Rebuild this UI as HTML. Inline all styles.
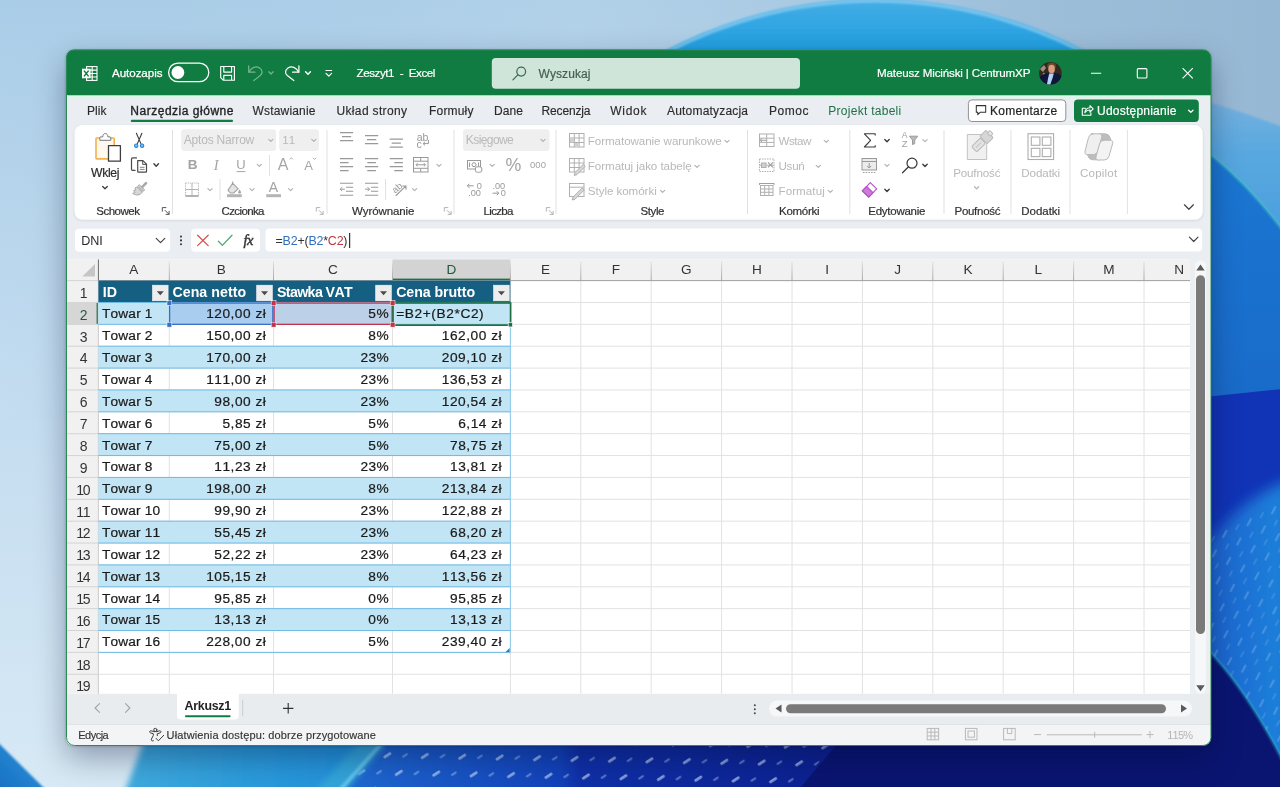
<!DOCTYPE html>
<html lang="pl"><head><meta charset="utf-8"><title>Zeszyt1 - Excel</title>
<style>
html,body{margin:0;padding:0;}
body{width:1280px;height:787px;overflow:hidden;position:relative;background:#b2d0e8;font-family:"Liberation Sans",sans-serif;font-kerning:none;}
svg{position:absolute;left:0;top:0;display:block;}
.t{position:absolute;white-space:pre;line-height:20px;height:20px;font-kerning:none;}
#txt{position:absolute;left:0;top:0;width:1280px;height:787px;will-change:transform;}
#win{position:absolute;left:0;top:0;width:1280px;height:787px;clip-path:inset(49.5px 69px 41.5px 66px round 8px);}
#shadow{position:absolute;left:66px;top:49.5px;width:1145px;height:696px;border-radius:8px;box-shadow:0 12px 30px rgba(0,10,40,.34),0 0 3px rgba(0,0,0,.28);}
</style></head><body>
<svg width="1280" height="787" viewBox="0 0 1280 787">
<defs>
<linearGradient id="wbase" x1="0" y1="0" x2="0" y2="1"><stop offset="0" stop-color="#aacde7"/><stop offset=".5" stop-color="#c3dcf0"/><stop offset="1" stop-color="#d7e9f5"/></linearGradient>
<linearGradient id="wtop" x1="0" y1="0" x2="1" y2="0"><stop offset="0" stop-color="#a8c9e4" stop-opacity="0"/><stop offset=".45" stop-color="#b6d4ea" stop-opacity=".6"/><stop offset=".8" stop-color="#9cbdd8" stop-opacity=".9"/><stop offset="1" stop-color="#97b8d4"/></linearGradient>
<linearGradient id="wdome" gradientUnits="userSpaceOnUse" x1="0" y1="0" x2="0" y2="110"><stop offset="0" stop-color="#43ade5"/><stop offset=".5" stop-color="#1f9ee0"/><stop offset="1" stop-color="#1b90dc"/></linearGradient>
<linearGradient id="wpet" x1="0" y1="0" x2="0" y2="1"><stop offset="0" stop-color="#7cb4df"/><stop offset=".3" stop-color="#5aa8e0"/><stop offset="1" stop-color="#3d99df"/></linearGradient>
<linearGradient id="wblue" x1="0" y1="0" x2="0" y2="1"><stop offset="0" stop-color="#1b78d3"/><stop offset="1" stop-color="#196ac9"/></linearGradient>
<linearGradient id="wtex" x1="0" y1="0" x2="1" y2="0"><stop offset="0" stop-color="#1a5ecb"/><stop offset="1" stop-color="#2084dc"/></linearGradient>
<linearGradient id="wsky" x1="0" y1="0" x2="1" y2="0"><stop offset="0" stop-color="#40abde"/><stop offset=".5" stop-color="#2a9bdc"/><stop offset="1" stop-color="#1f8cda"/></linearGradient>
<linearGradient id="wbot" gradientUnits="userSpaceOnUse" x1="340" y1="0" x2="840" y2="0"><stop offset="0" stop-color="#1f6ad2"/><stop offset=".44" stop-color="#1242ba"/><stop offset=".48" stop-color="#0f30a8"/><stop offset="1" stop-color="#0c2090"/></linearGradient>
<linearGradient id="wwedge" x1="1" y1="0" x2="0" y2="1"><stop offset="0" stop-color="#3696da"/><stop offset=".5" stop-color="#2283cf"/><stop offset="1" stop-color="#1a6ec2"/></linearGradient><pattern id="dash" width="31" height="21" patternUnits="userSpaceOnUse" patternTransform="rotate(-33)"><rect x="2" y="3" width="9" height="2.800" rx="1.400" fill="#d6e8ff" opacity=".6"/><rect x="18" y="13" width="6.500" height="2.200" rx="1.100" fill="#cfe2ff" opacity=".38"/></pattern>
<pattern id="dash2" width="16" height="22" patternUnits="userSpaceOnUse" patternTransform="rotate(28)"><rect x="3" y="2" width="2.2" height="9" rx="1.1" fill="#bfe0ff" opacity=".24"/><rect x="11" y="13" width="2" height="7" rx="1" fill="#bfe0ff" opacity=".15"/></pattern>
<filter id="b1"><feGaussianBlur stdDeviation="1.2"/></filter>
<filter id="b6"><feGaussianBlur stdDeviation="7"/></filter><filter id="b3"><feGaussianBlur stdDeviation="3"/></filter>
</defs>
<rect width="1280" height="787" fill="url(#wbase)"/>
<rect width="1280" height="420" fill="url(#wtop)"/>
<!-- dome -->
<circle cx="875" cy="449" r="450" fill="url(#wdome)" filter="url(#b1)"/><circle cx="875" cy="449" r="448" fill="none" stroke="#8ccdf0" stroke-width="3.5" opacity=".75" filter="url(#b1)"/>
<!-- right side petals -->
<path d="M1150 86 Q1230 106 1290 130 L1290 300 L1150 300 Z" fill="url(#wpet)" filter="url(#b1)"/>
<path d="M1150 118 Q1225 150 1290 240 L1290 420 L1150 420 Z" fill="url(#wblue)"/>
<path d="M1150 118 Q1225 150 1290 240" fill="none" stroke="#46c0c4" stroke-width="2" opacity=".85" filter="url(#b1)"/>
<path d="M1150 402 Q1220 396 1290 388 L1290 800 L1150 800 Z" fill="#1133b6"/>
<path d="M1195 560 Q1235 500 1290 480 L1290 800 L1195 800 Z" fill="url(#wtex)" filter="url(#b6)"/>
<path d="M1205 540 L1290 490 L1290 800 L1205 800 Z" fill="url(#dash2)"/>
<!-- bottom strip -->
<path d="M383 735 L1000 735 L1000 800 L326 800 Z" fill="url(#wbot)"/>
<path d="M383 735 L840 735 L790 800 L326 800 Z" fill="url(#dash)"/>
<path d="M845 735 L1262 735 L1290 790 L1290 800 L790 800 Z" fill="#0a1572"/>
<path d="M1130 600 Q1215 622 1290 775 L1290 800 L1130 800 Z" fill="#0a1572"/>
<path d="M1130 600 Q1215 622 1290 775" fill="none" stroke="#2fb6c8" stroke-width="2" opacity=".7" filter="url(#b1)"/>
<path d="M150 725 L396 725 L329 810 L118 810 Z" fill="url(#wsky)" filter="url(#b3)"/>
<path d="M380 735 L322 800" stroke="#3fb4d8" stroke-width="22" opacity=".55" filter="url(#b3)"/><path d="M389 735 L331 800" stroke="#6accee" stroke-width="4" opacity=".8" filter="url(#b1)"/>
<path d="M-5 739.500 L46 790 L-5 790 Z" fill="url(#wwedge)" filter="url(#b1)"/>
</svg>
<div id="shadow"></div>
<div id="win">
<svg width="1280" height="787" viewBox="0 0 1280 787">
<rect x="60" y="45" width="1160" height="710" fill="#eaedf1"/>
<rect x="60" y="45" width="1160" height="50.5" fill="#107c41"/>
<rect x="60" y="95.5" width="1160" height="1.6" fill="#d6fbe7"/>
<rect x="66.8" y="95.5" width="1.2" height="660" fill="#d6fbe7" opacity=".9"/>
<g fill="none" stroke="#fff" stroke-width="1.1">
<rect x="86.6" y="66.6" width="10.4" height="13.8" fill="none"/>
<path d="M86.6 70.1H97M86.6 73.5H97M86.6 77H97M92.2 66.6V80.4"/>
</g>
<rect x="82" y="68.7" width="8.6" height="9.6" fill="#fff"/>
<path d="M84 70.6l4.6 5.8M88.6 70.6l-4.6 5.8" stroke="#107c41" stroke-width="1.5" fill="none"/>
<rect x="168.600" y="63.100" width="40.200" height="18.600" rx="9.300" fill="none" stroke="#fff" stroke-width="1.300"/><circle cx="177.900" cy="72.500" r="6.400" fill="#fff"/>
<g fill="none" stroke="#fff" stroke-width="1.150" stroke-linejoin="round">
<path d="M220.700 66.500h13.700v13.700h-11.200l-2.500-2.500z"/><path d="M223.800 66.700v5.400h7.800v-5.400"/><path d="M223.800 80v-4.600h7.800v4.600"/></g>
<g fill="none" stroke="#fff" stroke-width="1.250" opacity=".42" stroke-linecap="round" stroke-linejoin="round">
<path d="M248.700 65.900v6.300h6.300"/><path d="M249 72c2.100-4.500 7.100-6.400 10.600-4 3.200 2.200 3.100 5.600.7 7.600l-6.500 5"/><path d="M268.800 71.800l2.200 2.200 2.200-2.200"/></g>
<g fill="none" stroke="#fff" stroke-width="1.250" stroke-linecap="round" stroke-linejoin="round">
<path d="M298.900 65.900v6.300h-6.300"/><path d="M298.600 72c-2.100-4.500-7.100-6.400-10.600-4-3.200 2.200-3.100 5.600-.7 7.600l6.500 5"/><path d="M305.600 71.800l2.400 2.400 2.400-2.400" stroke-width="1.500"/></g>
<g fill="none" stroke="#fff" stroke-width="1.2" stroke-linecap="round" stroke-linejoin="round"><path d="M326 70.5h5.6"/><path d="M326 73.4l2.8 2.8 2.8-2.8"/></g>
<rect x="491.8" y="58" width="308.2" height="30.7" rx="4" fill="#cfe5d9"/>
<g fill="none" stroke="#3d6b52" stroke-width="1.25" stroke-linecap="round"><circle cx="521.2" cy="71.6" r="4.4"/><path d="M517.9 74.9l-5 5"/></g>
<defs><clipPath id="av"><circle cx="1050.4" cy="73.3" r="11.3"/></clipPath><filter id="avb"><feGaussianBlur stdDeviation=".7"/></filter></defs>
<g clip-path="url(#av)"><rect x="1038" y="60" width="26" height="26" fill="#33291f"/>
<g filter="url(#avb)">
<path d="M1040 69l4-4 2 3-3 4zM1043.500 72.500l3 2.500-1 2-3-2z" fill="#b9aa96" opacity=".8"/>
<ellipse cx="1051.600" cy="66.200" rx="4.300" ry="3.600" fill="#6a4826"/>
<ellipse cx="1051.600" cy="69" rx="3.300" ry="4.300" fill="#d99d84"/>
<path d="M1038 86v-6c2-4.500 6-6.500 10.500-7l3 1.500 3-1.500c4.500.5 8 3 10 7v6z" fill="#10153a"/>
<path d="M1049.200 73.500h4.600l-1.400 5-2.600 7.500h-3.200l1.400-7.500z" fill="#b4d0f4"/>
</g></g>
<g fill="none" stroke="#fff" stroke-width="1.1"><path d="M1091 73.2h10.200"/><rect x="1137.300" y="68.6" width="9.600" height="9.400" rx="1"/><path d="M1182.600 68.200l10.200 10.200M1192.800 68.200l-10.200 10.200"/></g>
<rect x="130.8" y="119.8" width="102.2" height="2.2" rx="1" fill="#107c41"/>
<rect x="968.4" y="99.9" width="97.4" height="21.600" rx="3.5" fill="#fff" stroke="#8f9393" stroke-width="1"/>
<path d="M976.300 105.600h9.400v6.600h-5.300l-2.600 2.400v-2.400h-1.500z" fill="none" stroke="#333" stroke-width="1.050" stroke-linejoin="round"/>
<rect x="1074" y="99.4" width="124.800" height="22.500" rx="4" fill="#107c41"/>
<g fill="none" stroke="#fff" stroke-width="1.1" stroke-linejoin="round" stroke-linecap="round"><path d="M1085.500 108.300h-3.200v7h8.600v-2.600"/><path d="M1084.800 112.600c.4-3 2.400-4.700 5.200-4.800v-2.200l3.200 3.300-3.200 3.300v-2.200c-2.200 0-3.900.8-5.200 2.600z"/><path d="M1188.600 110.200l2.200 2.200 2.200-2.200" stroke-width="1.300"/></g>
<rect x="74.500" y="126" width="1128.500" height="94.500" rx="8" fill="#000" opacity=".10" filter="url(#rb)"/><defs><filter id="rb" x="-5%" y="-20%" width="110%" height="150%"><feGaussianBlur stdDeviation="1.600"/></filter></defs>
<rect x="74.500" y="125" width="1128.300" height="94.800" rx="8" fill="#fff"/>
<rect x="75" y="228.800" width="95" height="23" rx="4" fill="#fff"/>
<path d="M156.200 238.400l4.300 4.300 4.300-4.300" fill="none" stroke="#444" stroke-width="1.200" stroke-linecap="round" stroke-linejoin="round"/>
<g fill="#3a3a3a"><circle cx="181" cy="236.600" r="1.050"/><circle cx="181" cy="240.400" r="1.050"/><circle cx="181" cy="244.200" r="1.050"/></g>
<rect x="191.200" y="228.800" width="68.800" height="23" rx="4" fill="#fff"/>
<path d="M197.600 235.200l10.600 10.400M208.200 235.200l-10.600 10.400" stroke="#d8504d" stroke-width="1.250" fill="none" stroke-linecap="round"/>
<path d="M218.400 241.200l4 4.200 9.600-10.200" stroke="#4fa874" stroke-width="1.300" fill="none" stroke-linecap="round" stroke-linejoin="round"/>
<rect x="265.500" y="228.600" width="936.500" height="22.800" rx="4" fill="#fff"/>
<rect x="349.100" y="233" width="1.100" height="15" fill="#222"/>
<path d="M1189.400 237.200l4.300 4.300 4.300-4.300" fill="none" stroke="#444" stroke-width="1.200" stroke-linecap="round" stroke-linejoin="round"/>
<rect x="60" y="693.800" width="1160" height="30.500" fill="#e9ecef"/>
<path d="M177 693.800h61.800v21.700a4 4 0 0 1-4 4h-53.800a4 4 0 0 1-4-4z" fill="#fff"/>
<rect x="185" y="715.300" width="45.600" height="1.900" rx=".9" fill="#107c41"/>
<rect x="242.200" y="700" width="1" height="16" fill="#c9cdd1"/>
<g fill="none" stroke="#a3a7ab" stroke-width="1.200" stroke-linecap="round" stroke-linejoin="round"><path d="M99.500 703.600l-4.400 4.400 4.400 4.400"/><path d="M125.500 703.600l4.400 4.400-4.400 4.400"/></g>
<path d="M283 708.300h10.400M288.200 703.100v10.400" stroke="#333" stroke-width="1.150" fill="none"/>
<g fill="#444"><circle cx="754.800" cy="705.200" r="1"/><circle cx="754.800" cy="709.200" r="1"/><circle cx="754.800" cy="713.200" r="1"/></g>
<rect x="769" y="700.600" width="423" height="16" rx="8" fill="#f6f7f8"/>
<rect x="786" y="704.300" width="380" height="9" rx="4.500" fill="#7a7a7a"/>
<path d="M781.500 704.600v8l-6-4z" fill="#5a5a5a"/><path d="M1181 704.600v8l6-4z" fill="#5a5a5a"/>
<rect x="60" y="724.300" width="1160" height="30" fill="#f3f4f5"/><rect x="60" y="723.900" width="1160" height=".9" fill="#dcdfe2"/>
<g fill="none" stroke="#3d3d3d" stroke-width="1" stroke-linecap="round" stroke-linejoin="round"><circle cx="155.300" cy="729.900" r="1.600"/><path d="M153.400 740.800c-1.300.6-2.600-.4-2-1.700l1.900-3.600v-1.800l-2.800-.8c-1.400-.5-.9-2.400.6-2.100l2.600.8h3.200l2.600-.8c1.500-.3 2 1.600.6 2.100l-2.800.8v2"/><path d="M156 738.300l2.400 2.500 5.300-5.500"/></g>
<g fill="none" stroke="#b9b9b9" stroke-width="1">
<rect x="927.200" y="728.400" width="11.400" height="11.400"/><path d="M927.200 732.200h11.400M927.200 736h11.400M931 728.400v11.400M934.800 728.400v11.400"/>
<rect x="965.400" y="728.400" width="11.600" height="11.400"/><rect x="968" y="731" width="6.400" height="6.200"/>
<rect x="1003.600" y="728.400" width="11.600" height="11.400"/><path d="M1007.400 728.400v5.200h4.400v-5.200"/>
<path d="M1034 734.600h7M1046.800 734.800h95M1094.700 731.800v6M1146.500 734.600h7M1150 731.100v7"/></g>
<path d="M172.5 130V214 M327 130V214 M454 130V214 M556 130V214 M747.5 130V214 M849.8 130V214 M944 130V214 M1011 130V214 M1070 130V214 M1127.4 130V214" stroke="#e1e1e1" stroke-width="1" fill="none"/>
<g fill="none" stroke="#555" stroke-width="1"><path d="M162.3 211.6V207.6h4"/><path d="M164.9 210.2l4.200 4.200M169.10000000000002 211.0v3.400h-3.400"/></g>
<g fill="none" stroke="#b3b3b3" stroke-width="1"><path d="M316.3 211.6V207.6h4"/><path d="M318.90000000000003 210.2l4.200 4.200M323.1 211.0v3.400h-3.400"/></g>
<g fill="none" stroke="#b3b3b3" stroke-width="1"><path d="M444.3 211.6V207.6h4"/><path d="M446.90000000000003 210.2l4.200 4.200M451.1 211.0v3.400h-3.400"/></g>
<g fill="none" stroke="#b3b3b3" stroke-width="1"><path d="M546.3 211.6V207.6h4"/><path d="M548.9 210.2l4.200 4.200M553.0999999999999 211.0v3.400h-3.400"/></g>
<path d="M1184.400 204.800l4.500 4.500 4.500-4.500" fill="none" stroke="#444" stroke-width="1.250" stroke-linecap="round" stroke-linejoin="round"/>
<g stroke-linejoin="round">
<rect x="96" y="138" width="18.200" height="20.900" rx=".8" fill="#fef8ee" stroke="#f2b04e" stroke-width="1.600"/>
<path d="M99.800 140.300v-2.600c0-.5.300-.8.800-.8h2.100c.1-2.100 1.100-3.400 2.600-3.400s2.500 1.300 2.600 3.400h2.100c.5 0 .8.300.8.800v2.600z" fill="#fff" stroke="#777" stroke-width="1"/>
<rect x="108.500" y="145.700" width="11.900" height="15.500" fill="#fff" stroke="#3d3d3d" stroke-width="1.300"/></g>
<path d="M102.70 186.45l2.3 2.3 2.3-2.3" fill="none" stroke="#3c3c3c" stroke-width="1.3" stroke-linecap="round" stroke-linejoin="round"/>
<g fill="none" stroke-linecap="round"><path d="M136.400 133.300l4.600 10.600M141.900 133.300l-4.600 10.600" stroke="#3c3c3c" stroke-width="1.100"/>
<circle cx="136.200" cy="145.700" r="1.700" fill="#7cc3f2" stroke="#2b86d8" stroke-width="1.100"/><circle cx="142.100" cy="145.700" r="1.700" fill="#7cc3f2" stroke="#2b86d8" stroke-width="1.100"/></g>
<g fill="none" stroke="#4a4a4a" stroke-width="1.200" stroke-linejoin="round" stroke-linecap="round"><path d="M136.500 157.900h-4c-.6 0-1 .4-1 1v10.400c0 .6.400 1 1 1h2.600"/><path d="M137.700 160.600h5.200l3.600 3.600v7.200c0 .4-.3.700-.7.700h-7.400c-.4 0-.7-.3-.7-.7z" fill="#fff"/><path d="M142.700 160.800v3.600h3.600" stroke-width="1"/><path d="M140.200 167.300h4M140.200 169.400h4" stroke-width=".9" stroke="#777"/></g>
<path d="M153.90 163.85l2.3 2.3 2.3-2.3" fill="none" stroke="#3c3c3c" stroke-width="1.4" stroke-linecap="round" stroke-linejoin="round"/>
<g stroke-linejoin="round" stroke-linecap="round"><path d="M146 183.200l-4.600 4.600" stroke="#a9a9a9" stroke-width="2.600" fill="none"/><path d="M139.600 184.900l5 5-1.700 1.700-5-5z" fill="#c9c9c9" stroke="#a3a3a3" stroke-width=".9"/><path d="M137.300 187.200l5 5-2.200 2.200c-2.400 1-5 .7-7.400-.9l2.300-1.200-1.500-1.700 2.100-.6-.5-1.700z" fill="#d6d6d6" stroke="#a3a3a3" stroke-width=".9"/></g>
<rect x="181.200" y="129.200" width="94.800" height="21.800" rx="3" fill="#efefef"/><rect x="279.200" y="129.200" width="39.800" height="21.800" rx="3" fill="#efefef"/>
<path d="M268.70 139.35l2.1 2.1 2.1-2.1" fill="none" stroke="#b3b3b3" stroke-width="1.2" stroke-linecap="round" stroke-linejoin="round"/>
<path d="M311.70 139.35l2.1 2.1 2.1-2.1" fill="none" stroke="#b3b3b3" stroke-width="1.2" stroke-linecap="round" stroke-linejoin="round"/>
<path d="M236.600 171.600h8.800" stroke="#a6a6a6" stroke-width="1"/>
<path d="M257.20 164.35l2.1 2.1 2.1-2.1" fill="none" stroke="#b3b3b3" stroke-width="1.2" stroke-linecap="round" stroke-linejoin="round"/>
<path d="M269.500 155V176M220 179V200M385.500 179V200" stroke="#e1e1e1" stroke-width="1"/>
<path d="M289.700 159.400l1.600-1.600 1.600 1.600" fill="none" stroke="#a6a6a6" stroke-width=".9"/>
<path d="M313 157.800l1.600 1.600 1.600-1.600" fill="none" stroke="#a6a6a6" stroke-width=".9"/>
<g fill="none" stroke="#b3b3b3"><rect x="185.500" y="183" width="13" height="13" stroke-width="1" stroke-dasharray="1.200 1"/><path d="M192 183v13M185.500 189.500h13" stroke-width="1"/><path d="M185.500 196h13" stroke-width="1.400" stroke="#a0a0a0"/></g>
<path d="M207.90 188.55l2.1 2.1 2.1-2.1" fill="none" stroke="#b3b3b3" stroke-width="1.2" stroke-linecap="round" stroke-linejoin="round"/>
<g fill="none" stroke="#a3a3a3" stroke-width="1.100" stroke-linejoin="round"><path d="M232.600 183.200l5.600 5.600-4.600 4.200h-3.200l-2.400-2.600z" fill="#e4e4e4"/><path d="M232.600 183.200v-1.800"/><path d="M239.600 189.400c.9 1.300 1.400 2.100 1.400 2.800a1.400 1.400 0 0 1-2.800 0c0-.7.500-1.500 1.400-2.800z" fill="#a3a3a3" stroke="none"/></g><rect x="227" y="194.200" width="14.800" height="3" fill="#b5b5b5"/>
<path d="M249.90 188.55l2.1 2.1 2.1-2.1" fill="none" stroke="#b3b3b3" stroke-width="1.2" stroke-linecap="round" stroke-linejoin="round"/>
<rect x="266.200" y="194.200" width="14.800" height="3" fill="#b5b5b5"/>
<path d="M288.50 188.55l2.1 2.1 2.1-2.1" fill="none" stroke="#b3b3b3" stroke-width="1.2" stroke-linecap="round" stroke-linejoin="round"/>
<path d="M340.00 132.60h13.2 M342.00 136.60h9.2 M340.00 140.60h13.2" stroke="#999999" stroke-width="1.200" fill="none"/>
<path d="M365.00 135.60h13.2 M367.00 139.60h9.2 M365.00 143.60h13.2" stroke="#999999" stroke-width="1.200" fill="none"/>
<path d="M389.70 139.20h13.2 M391.70 143.20h9.2 M389.70 147.20h13.2" stroke="#999999" stroke-width="1.200" fill="none"/>
<path d="M340.00 158.60h13.2 M340.00 162.60h8.6 M340.00 166.60h13.2 M340.00 170.60h8.6" stroke="#999999" stroke-width="1.200" fill="none"/>
<path d="M365.00 158.60h13.2 M367.30 162.60h8.6 M365.00 166.60h13.2 M367.30 170.60h8.6" stroke="#999999" stroke-width="1.200" fill="none"/>
<path d="M389.70 158.60h13.2 M394.30 162.60h8.6 M389.70 166.60h13.2 M394.30 170.60h8.6" stroke="#999999" stroke-width="1.200" fill="none"/>
<path d="M428.400 140v3.600h-5.200M425 141.800l-1.900 1.800 1.900 1.800" fill="none" stroke="#999999" stroke-width="1"/>
<g fill="none" stroke="#999999" stroke-width="1"><rect x="413.500" y="157.500" width="14.500" height="14.500"/><path d="M413.500 161.200h14.500M413.500 168.300h14.500M420.700 157.500v3.700M420.700 168.300v3.700"/><path d="M416 164.800h9.500M417.600 163.200l-1.600 1.600 1.600 1.600M423.900 163.200l1.600 1.600-1.600 1.600"/></g>
<path d="M436.90 164.35l2.1 2.1 2.1-2.1" fill="none" stroke="#b3b3b3" stroke-width="1.2" stroke-linecap="round" stroke-linejoin="round"/>
<path d="M340 183.200h13.200M346 187.200h7.200M346 191.200h7.200M340 195.200h13.200" stroke="#999999" stroke-width="1.050" fill="none"/>
<path d="M344.8 189.200h-4.600M342.2 187.200l-2 2 2 2" stroke="#999999" stroke-width="1" fill="none"/>
<path d="M365 183.200h13.200M371 187.200h7.200M371 191.200h7.200M365 195.200h13.200" stroke="#999999" stroke-width="1.050" fill="none"/>
<path d="M365 189.200h4.600M367.6 187.200l2 2-2 2" stroke="#999999" stroke-width="1" fill="none"/>
<g fill="none" stroke="#999999" stroke-width="1.050" stroke-linecap="round"><path d="M396 195.500l10-9.600M406 185.900h-3.400M406 185.900v3.400"/></g>
<path d="M412.50 188.55l2.1 2.1 2.1-2.1" fill="none" stroke="#b3b3b3" stroke-width="1.2" stroke-linecap="round" stroke-linejoin="round"/>
<rect x="463" y="129.200" width="86.500" height="21.800" rx="3" fill="#efefef"/>
<path d="M540.90 139.35l2.1 2.1 2.1-2.1" fill="none" stroke="#b3b3b3" stroke-width="1.2" stroke-linecap="round" stroke-linejoin="round"/>
<g fill="none" stroke="#999999" stroke-width="1"><rect x="467.500" y="160.500" width="13" height="8.500"/><circle cx="474" cy="164.700" r="2"/><path d="M469.500 162.500v4.500M478.500 162.500v4.500"/><ellipse cx="478.600" cy="168" rx="3.200" ry="1.300" fill="#fff"/><path d="M475.400 168v3c0 .7 1.400 1.300 3.200 1.300s3.200-.6 3.200-1.300v-3" fill="#fff"/></g>
<path d="M490.10 164.35l2.1 2.1 2.1-2.1" fill="none" stroke="#b3b3b3" stroke-width="1.2" stroke-linecap="round" stroke-linejoin="round"/>
<path d="M473.600 185.800h-6.200M469.400 183.800l-2 2 2 2" fill="none" stroke="#999999" stroke-width="1"/>
<path d="M492.600 193.200h6.200M496.800 191.200l2 2-2 2" fill="none" stroke="#999999" stroke-width="1"/>
<g fill="none" stroke="#b0b0b0" stroke-width="1"><rect x="569.500" y="133.500" width="14.500" height="13.500"/><path d="M569.500 138h14.500M569.500 142.500h14.500M574.300 133.500v13.500M579.100 133.500v13.500"/><path d="M570 138.500h4v4h-4zM574.800 142.900h4v3.600h-4z" fill="#d0d0d0" stroke="none"/></g>
<g fill="none" stroke="#b0b0b0" stroke-width="1"><rect x="569.500" y="158.500" width="14.500" height="13.500"/><path d="M569.500 163h14.500M569.500 167.500h14.500M574.300 158.500v13.500M579.100 158.500v13.500"/><path d="M575 172.600l8.200-8.200 2 2-8.200 8.200-2.800.8z" fill="#d8d8d8"/></g>
<g fill="none" stroke="#b0b0b0" stroke-width="1"><rect x="569.500" y="183.500" width="14.500" height="13"/><path d="M569.500 187.200h14.500"/><path d="M573 197.200l9.200-9.200 2 2-9.200 9.200-2.800.8z" fill="#d8d8d8"/></g>
<path d="M724.90 140.35l2.1 2.1 2.1-2.1" fill="none" stroke="#b3b3b3" stroke-width="1.2" stroke-linecap="round" stroke-linejoin="round"/>
<path d="M694.90 165.35l2.1 2.1 2.1-2.1" fill="none" stroke="#b3b3b3" stroke-width="1.2" stroke-linecap="round" stroke-linejoin="round"/>
<path d="M660.50 190.35l2.1 2.1 2.1-2.1" fill="none" stroke="#b3b3b3" stroke-width="1.2" stroke-linecap="round" stroke-linejoin="round"/>
<g fill="none" stroke="#b0b0b0" stroke-width="1"><rect x="759.500" y="134" width="14.500" height="12.500"/><path d="M759.500 138.200h14.500M759.500 142.400h14.500M766.700 134v12.500"/><path d="M767 140.300h-7M762.200 138.300l-2 2 2 2" stroke="#9f9f9f"/></g>
<g fill="none" stroke="#b0b0b0" stroke-width="1"><rect x="759.500" y="159" width="14.500" height="12.500" stroke-dasharray="1.500 1"/><path d="M759.500 165.200h14.500"/><path d="M768 162.300l5 5M773 162.300l-5 5" stroke="#9f9f9f" stroke-width="1.200"/><rect x="761.500" y="163" width="4.500" height="4.500" fill="#d0d0d0"/></g>
<g fill="none" stroke="#b0b0b0" stroke-width="1"><rect x="760.500" y="185.500" width="12.500" height="10"/><path d="M760.500 189h12.500M760.500 192.300h12.500M764.700 185.500v10M768.900 185.500v10"/><path d="M759.500 183v2M774 183v2M759.500 183.500h14.500" stroke="#9f9f9f"/></g>
<path d="M824.20 140.35l2.1 2.1 2.1-2.1" fill="none" stroke="#b3b3b3" stroke-width="1.2" stroke-linecap="round" stroke-linejoin="round"/>
<path d="M816.20 165.35l2.1 2.1 2.1-2.1" fill="none" stroke="#b3b3b3" stroke-width="1.2" stroke-linecap="round" stroke-linejoin="round"/>
<path d="M828.20 190.35l2.1 2.1 2.1-2.1" fill="none" stroke="#b3b3b3" stroke-width="1.2" stroke-linecap="round" stroke-linejoin="round"/>
<path d="M875.200 135.600v-1.800h-10.800l6.200 6.600-6.200 6.600h10.800v-1.800" fill="none" stroke="#3a3a3a" stroke-width="1.100" stroke-linejoin="round"/>
<path d="M884.80 139.50l2.2 2.2 2.2-2.2" fill="none" stroke="#3c3c3c" stroke-width="1.4" stroke-linecap="round" stroke-linejoin="round"/>
<path d="M909.400 136.200h8.400l-3.100 3.800v3.600l-2.200 1v-4.600z" fill="#b9b9b9" stroke="#9c9c9c" stroke-width="1" stroke-linejoin="round"/>
<path d="M922.90 139.55l2.1 2.1 2.1-2.1" fill="none" stroke="#b3b3b3" stroke-width="1.2" stroke-linecap="round" stroke-linejoin="round"/>
<g fill="none" stroke="#999999" stroke-width="1"><rect x="862" y="158.500" width="14.500" height="11.500" fill="#ececec"/><path d="M862 161.500h14.500"/><path d="M869.200 163v5M867.200 166l2 2 2-2"/><path d="M863 172.500h12.500" stroke-dasharray="1.500 1.200"/></g>
<path d="M884.90 164.35l2.1 2.1 2.1-2.1" fill="none" stroke="#b3b3b3" stroke-width="1.2" stroke-linecap="round" stroke-linejoin="round"/>
<g fill="none" stroke="#3a3a3a" stroke-width="1.250" stroke-linecap="round"><circle cx="912" cy="163.200" r="5"/><path d="M908.300 167l-5.800 5.800"/></g>
<path d="M922.80 164.30l2.2 2.2 2.2-2.2" fill="none" stroke="#3c3c3c" stroke-width="1.4" stroke-linecap="round" stroke-linejoin="round"/>
<g stroke-linejoin="round"><path d="M862.300 190.900l8-8.200 6.400 6.200-8 8.200z" fill="#fff" stroke="#b552c6" stroke-width="1.150"/><path d="M862.300 190.900l4.300-4.400 6.400 6.200-4.300 4.400z" fill="#cf7adb" stroke="#b552c6" stroke-width="1.150"/></g>
<path d="M884.80 189.30l2.2 2.2 2.2-2.2" fill="none" stroke="#3c3c3c" stroke-width="1.4" stroke-linecap="round" stroke-linejoin="round"/>
<g stroke="#c2c2c2" stroke-width="1" stroke-linejoin="round"><path d="M967.300 134.500h19.400v25h-19.400z" fill="#f0f0f0"/>
<g transform="rotate(45 980.500 143)"><rect x="975.300" y="130.200" width="10.400" height="8.600" rx="1" fill="#d6d6d6" stroke="#b9b9b9"/><rect x="978.300" y="127.600" width="4.400" height="3.600" rx=".8" fill="#e9e9e9" stroke="#b9b9b9"/><rect x="976.800" y="139.600" width="7.400" height="12.400" rx="1.600" fill="#e3e3e3" stroke="#b9b9b9"/><path d="M980.500 142.400v7" stroke="#c4c4c4" fill="none"/></g></g>
<path d="M974.50 186.75l2.1 2.1 2.1-2.1" fill="none" stroke="#b3b3b3" stroke-width="1.2" stroke-linecap="round" stroke-linejoin="round"/>
<g fill="none" stroke="#aeaeae" stroke-width="1.100"><rect x="1028" y="133.700" width="25.600" height="25.800"/><rect x="1031.300" y="137" width="8.600" height="8.300"/><rect x="1042.300" y="137" width="8.600" height="8.300"/><rect x="1031.300" y="148.300" width="8.600" height="8.300"/><rect x="1042.300" y="148.300" width="8.600" height="8.300"/></g>
<g stroke="#b9b9b9" stroke-width="1" stroke-linejoin="round">
<path d="M1098.500 133.800h6.500q4 0 5 3.800l.9 3h-9.400z" fill="#bdbdbd"/>
<path d="M1099.500 159.800h-6.500q-4 0-5-3.800l-.9-3h9.400z" fill="#bdbdbd"/>
<path d="M1091 133.800h8q3.600 0 2.600 3.600l-3.600 13.400q-1 3.800-4.800 3.800h-5.500q-3.600 0-2.600-3.600l3.400-13.400q1-3.800 4.800-3.800z" fill="#efefef"/>
<path d="M1102 140.200h8q3.600 0 2.600 3.600l-3.600 12.400q-1 3.800-4.800 3.800h-5.500q-3.600 0-2.600-3.600l3.400-12.400q1-3.800 4.800-3.800z" fill="#f3f3f3"/></g>
<rect x="60" y="259.5" width="1130.0" height="434.29999999999995" fill="#fff"/>
<rect x="60" y="259.5" width="1130.0" height="21.100000000000023" fill="#f1f1f1"/>
<rect x="60" y="259.5" width="38.400000000000006" height="434.29999999999995" fill="#f1f1f1"/>
<rect x="392.5" y="259.5" width="117.89999999999998" height="21.100000000000023" fill="#d3d3d3"/>
<rect x="392.5" y="278.6" width="117.89999999999998" height="2" fill="#1e7145"/>
<rect x="60" y="302.47" width="38.400000000000006" height="21.87" fill="#d6d6d6"/>
<rect x="96.60000000000001" y="302.47" width="2" height="21.87" fill="#1e7145"/>
<path d="M98.4 280.60H1190.0 M98.4 302.47H1190.0 M98.4 324.34H1190.0 M98.4 346.21H1190.0 M98.4 368.08H1190.0 M98.4 389.95H1190.0 M98.4 411.82H1190.0 M98.4 433.69H1190.0 M98.4 455.56H1190.0 M98.4 477.43H1190.0 M98.4 499.30H1190.0 M98.4 521.17H1190.0 M98.4 543.04H1190.0 M98.4 564.91H1190.0 M98.4 586.78H1190.0 M98.4 608.65H1190.0 M98.4 630.52H1190.0 M98.4 652.39H1190.0 M98.4 674.26H1190.0 M98.40 280.6V693.8 M169.30 280.6V693.8 M273.50 280.6V693.8 M392.50 280.6V693.8 M510.40 280.6V693.8 M580.80 280.6V693.8 M651.20 280.6V693.8 M721.60 280.6V693.8 M792.00 280.6V693.8 M862.40 280.6V693.8 M932.80 280.6V693.8 M1003.20 280.6V693.8 M1073.60 280.6V693.8 M1144.00 280.6V693.8" stroke="#e2e2e2" stroke-width="1" fill="none"/>
<path d="M66 280.60H98.4 M66 302.47H98.4 M66 324.34H98.4 M66 346.21H98.4 M66 368.08H98.4 M66 389.95H98.4 M66 411.82H98.4 M66 433.69H98.4 M66 455.56H98.4 M66 477.43H98.4 M66 499.30H98.4 M66 521.17H98.4 M66 543.04H98.4 M66 564.91H98.4 M66 586.78H98.4 M66 608.65H98.4 M66 630.52H98.4 M66 652.39H98.4 M66 674.26H98.4" stroke="#d4d4d4" stroke-width="1" fill="none"/>
<defs><linearGradient id="hdg" gradientUnits="userSpaceOnUse" x1="0" y1="259.5" x2="0" y2="280.6"><stop offset="0" stop-color="#e6e6e6"/><stop offset="1" stop-color="#a6a6a6"/></linearGradient></defs><path d="M169.30 261.5V280.6 M273.50 261.5V280.6 M392.50 261.5V280.6 M510.40 261.5V280.6 M580.80 261.5V280.6 M651.20 261.5V280.6 M721.60 261.5V280.6 M792.00 261.5V280.6 M862.40 261.5V280.6 M932.80 261.5V280.6 M1003.20 261.5V280.6 M1073.60 261.5V280.6 M1144.00 261.5V280.6" stroke="url(#hdg)" stroke-width="1" fill="none"/>
<path d="M98.4 280.6H1190.0" stroke="#a2a2a2" stroke-width="1" fill="none"/>
<path d="M98.4 259.5V280.6" stroke="#6a6a6a" stroke-width="1" fill="none"/>
<path d="M98.4 280.6V693.8" stroke="#cfcfcf" stroke-width="1" fill="none"/>
<path d="M95 264v12.600h-12.700z" fill="#c6c6c6"/>
<rect x="98.4" y="280.6" width="412.0" height="21.87" fill="#156082"/>
<rect x="98.4" y="302.47" width="412.0" height="21.87" fill="#c1e5f5"/>
<rect x="98.4" y="346.21" width="412.0" height="21.87" fill="#c1e5f5"/>
<rect x="98.4" y="389.95" width="412.0" height="21.87" fill="#c1e5f5"/>
<rect x="98.4" y="433.69" width="412.0" height="21.87" fill="#c1e5f5"/>
<rect x="98.4" y="477.43" width="412.0" height="21.87" fill="#c1e5f5"/>
<rect x="98.4" y="521.17" width="412.0" height="21.87" fill="#c1e5f5"/>
<rect x="98.4" y="564.91" width="412.0" height="21.87" fill="#c1e5f5"/>
<rect x="98.4" y="608.65" width="412.0" height="21.87" fill="#c1e5f5"/>
<path d="M98.4 302.47H510.4 M98.4 324.34H510.4 M98.4 346.21H510.4 M98.4 368.08H510.4 M98.4 389.95H510.4 M98.4 411.82H510.4 M98.4 433.69H510.4 M98.4 455.56H510.4 M98.4 477.43H510.4 M98.4 499.30H510.4 M98.4 521.17H510.4 M98.4 543.04H510.4 M98.4 564.91H510.4 M98.4 586.78H510.4 M98.4 608.65H510.4 M98.4 630.52H510.4 M98.4 652.39H510.4" stroke="#6cbbe6" stroke-width="1" fill="none"/>
<path d="M510.4 302.47V652.3900000000001" stroke="#8cc9ea" stroke-width="1" fill="none"/>
<rect x="169.3" y="302.47" width="104.19999999999999" height="21.87" fill="#a9cdee"/>
<rect x="273.5" y="302.47" width="119.0" height="21.87" fill="#bcd0e8"/>
<rect x="169.60000000000002" y="303.07000000000005" width="103.19999999999999" height="21.27" fill="none" stroke="#3a6fc6" stroke-width="1.300"/>
<rect x="274.1" y="303.07000000000005" width="118.0" height="21.27" fill="none" stroke="#c2334a" stroke-width="1.300"/>
<rect x="393.0" y="302.97" width="117.59999999999998" height="22.17" fill="none" stroke="#1e7145" stroke-width="1.700"/>
<rect x="167.00" y="300.47" width="4.800" height="4.800" fill="#3a6fc6" stroke="#fff" stroke-width=".5"/>
<rect x="167.00" y="322.34" width="4.800" height="4.800" fill="#3a6fc6" stroke="#fff" stroke-width=".5"/>
<rect x="271.20" y="300.47" width="4.800" height="4.800" fill="#c2334a" stroke="#fff" stroke-width=".5"/>
<rect x="271.20" y="322.34" width="4.800" height="4.800" fill="#c2334a" stroke="#fff" stroke-width=".5"/>
<rect x="390.20" y="300.47" width="4.800" height="4.800" fill="#c2334a" stroke="#fff" stroke-width=".5"/>
<rect x="390.20" y="322.34" width="4.800" height="4.800" fill="#c2334a" stroke="#fff" stroke-width=".5"/>
<rect x="508.2" y="322.54" width="4.400" height="4.400" fill="#1e7145" stroke="#fff" stroke-width=".7"/>
<path d="M509.59999999999997 647.8900000000001v4h-4z" fill="#2b7bb5"/>
<rect x="152.50" y="285.20" width="15.600" height="15.600" fill="#ededed" stroke="#fafafa" stroke-width=".6"/><path d="M156.80 291.30h7l-3.500 4z" fill="#4a4a4a"/>
<rect x="256.70" y="285.20" width="15.600" height="15.600" fill="#ededed" stroke="#fafafa" stroke-width=".6"/><path d="M261.00 291.30h7l-3.500 4z" fill="#4a4a4a"/>
<rect x="375.70" y="285.20" width="15.600" height="15.600" fill="#ededed" stroke="#fafafa" stroke-width=".6"/><path d="M380.00 291.30h7l-3.500 4z" fill="#4a4a4a"/>
<rect x="493.60" y="285.20" width="15.600" height="15.600" fill="#ededed" stroke="#fafafa" stroke-width=".6"/><path d="M497.90 291.30h7l-3.500 4z" fill="#4a4a4a"/>
<rect x="1190.0" y="259.5" width="40" height="434.29999999999995" fill="#eceff2"/>
<rect x="1195" y="260.500" width="11" height="433" rx="5.500" fill="#f6f7f8"/>
<rect x="1196" y="275.300" width="9" height="358.700" rx="4.500" fill="#7a7a7a"/>
<path d="M1196.300 270.600h8.400l-4.200-6z" fill="#5a5a5a"/><path d="M1196.300 685.200h8.400l-4.200 6z" fill="#5a5a5a"/>
</svg>
<div id="txt">
<span class="t " style="left:112.04px;top:62.70px;font-size:11.6px;color:#fff;letter-spacing:-0.064px;-webkit-text-stroke:.25px #fff;">Autozapis</span>
<span class="t " style="left:356.54px;top:63.30px;font-size:11.6px;color:#fff;letter-spacing:-0.425px;-webkit-text-stroke:.2px #fff;">Zeszyt1  -  Excel</span>
<span class="t " style="left:538.52px;top:63.90px;font-size:12px;color:#44604f;letter-spacing:0.089px;-webkit-text-stroke:.2px #44604f;">Wyszukaj</span>
<span class="t " style="left:877.04px;top:63.10px;font-size:11.6px;color:#fff;letter-spacing:-0.159px;-webkit-text-stroke:.2px #fff;">Mateusz Miciński | CentrumXP</span>
<span class="t " style="left:87.02px;top:100.80px;font-size:12px;color:#2b2b2b;letter-spacing:0.041px;-webkit-text-stroke:.15px #2b2b2b;">Plik</span>
<span class="t " style="left:252.52px;top:100.80px;font-size:12px;color:#2b2b2b;letter-spacing:0.178px;-webkit-text-stroke:.15px #2b2b2b;">Wstawianie</span>
<span class="t " style="left:336.52px;top:100.80px;font-size:12px;color:#2b2b2b;letter-spacing:0.342px;-webkit-text-stroke:.15px #2b2b2b;">Układ strony</span>
<span class="t " style="left:429.02px;top:100.80px;font-size:12px;color:#2b2b2b;letter-spacing:0.187px;-webkit-text-stroke:.15px #2b2b2b;">Formuły</span>
<span class="t " style="left:494.02px;top:100.80px;font-size:12px;color:#2b2b2b;letter-spacing:0.091px;-webkit-text-stroke:.15px #2b2b2b;">Dane</span>
<span class="t " style="left:541.52px;top:100.80px;font-size:12px;color:#2b2b2b;letter-spacing:-0.153px;-webkit-text-stroke:.15px #2b2b2b;">Recenzja</span>
<span class="t " style="left:610.27px;top:100.80px;font-size:12px;color:#2b2b2b;letter-spacing:0.717px;-webkit-text-stroke:.15px #2b2b2b;">Widok</span>
<span class="t " style="left:667.02px;top:100.80px;font-size:12px;color:#2b2b2b;letter-spacing:0.188px;-webkit-text-stroke:.15px #2b2b2b;">Automatyzacja</span>
<span class="t " style="left:769.02px;top:100.80px;font-size:12px;color:#2b2b2b;letter-spacing:0.528px;-webkit-text-stroke:.15px #2b2b2b;">Pomoc</span>
<span class="t " style="left:130.27px;top:100.80px;font-size:12px;color:#1f1f1f;letter-spacing:0.521px;-webkit-text-stroke:0.35px #1f1f1f;">Narzędzia główne</span>
<span class="t " style="left:828.27px;top:100.80px;font-size:12px;color:#1e7145;letter-spacing:0.276px;">Projekt tabeli</span>
<span class="t " style="left:990.02px;top:100.80px;font-size:12px;color:#242424;letter-spacing:0.279px;-webkit-text-stroke:.2px #242424;">Komentarze</span>
<span class="t " style="left:1097.02px;top:100.80px;font-size:12px;color:#fff;letter-spacing:0.228px;-webkit-text-stroke:.2px #fff;">Udostępnianie</span>
<span class="t " style="left:81.25px;top:230.60px;font-size:12.6px;color:#2b2b2b;letter-spacing:-0.096px;">DNI</span>
<span class="t" style="left:243.600px;top:230.300px;font-family:'Liberation Serif',serif;font-style:italic;font-size:14.500px;color:#3a3a3a;letter-spacing:-.5px;-webkit-text-stroke:.45px #333">fx</span>
<span class="t" style="left:275.5px;top:230.800px;font-size:12.4px;letter-spacing:-0.175px"><span style="color:#333">=</span><span style="color:#2e6fc0">B2</span><span style="color:#333">+(</span><span style="color:#2e6fc0">B2</span><span style="color:#333">*</span><span style="color:#c0353f">C2</span><span style="color:#333">)</span></span>
<span class="t " style="left:184.50px;top:696.30px;font-size:12.4px;color:#222;letter-spacing:-0.250px;font-weight:700;">Arkusz1</span>
<span class="t " style="left:78.31px;top:725.10px;font-size:11px;color:#333;letter-spacing:-0.527px;-webkit-text-stroke:.15px #333;">Edycja</span>
<span class="t " style="left:166.56px;top:725.10px;font-size:11px;color:#333;letter-spacing:0.135px;-webkit-text-stroke:.15px #333;">Ułatwienia dostępu: dobrze przygotowane</span>
<span class="t " style="left:1167.16px;top:725.30px;font-size:11px;color:#b5b5b5;letter-spacing:-0.751px;">115%</span>
<span class="t " style="left:96.29px;top:200.50px;font-size:11.5px;color:#303030;letter-spacing:-0.499px;-webkit-text-stroke:.2px #303030;">Schowek</span>
<span class="t " style="left:221.54px;top:200.50px;font-size:11.5px;color:#303030;letter-spacing:-0.625px;-webkit-text-stroke:.2px #303030;">Czcionka</span>
<span class="t " style="left:352.04px;top:200.50px;font-size:11.5px;color:#303030;letter-spacing:-0.095px;-webkit-text-stroke:.2px #303030;">Wyrównanie</span>
<span class="t " style="left:483.54px;top:200.50px;font-size:11.5px;color:#303030;letter-spacing:-0.665px;-webkit-text-stroke:.2px #303030;">Liczba</span>
<span class="t " style="left:640.54px;top:200.50px;font-size:11.5px;color:#303030;letter-spacing:-0.412px;-webkit-text-stroke:.2px #303030;">Style</span>
<span class="t " style="left:779.04px;top:200.50px;font-size:11.5px;color:#303030;letter-spacing:-0.293px;-webkit-text-stroke:.2px #303030;">Komórki</span>
<span class="t " style="left:868.34px;top:200.50px;font-size:11.5px;color:#303030;letter-spacing:-0.260px;-webkit-text-stroke:.2px #303030;">Edytowanie</span>
<span class="t " style="left:954.54px;top:200.50px;font-size:11.5px;color:#303030;letter-spacing:-0.290px;-webkit-text-stroke:.2px #303030;">Poufność</span>
<span class="t " style="left:1021.24px;top:200.50px;font-size:11.5px;color:#303030;letter-spacing:-0.012px;-webkit-text-stroke:.2px #303030;">Dodatki</span>
<span class="t " style="left:91.11px;top:163.20px;font-size:12.2px;color:#2b2b2b;letter-spacing:-0.361px;-webkit-text-stroke:.2px #2b2b2b;">Wklej</span>
<span class="t " style="left:183.82px;top:130.20px;font-size:12px;color:#b9b9b9;letter-spacing:-0.203px;">Aptos Narrow</span>
<span class="t " style="left:282.30px;top:130.20px;font-size:11.5px;color:#b9b9b9;">11</span>
<span class="t " style="left:187.63px;top:155.00px;font-size:13.5px;color:#a3a3a3;font-weight:700;">B</span>
<span class="t" style="left:213.700px;top:155px;font-family:'Liberation Serif',serif;font-style:italic;font-size:14.500px;color:#a6a6a6">I</span>
<span class="t " style="left:236.31px;top:154.60px;font-size:13px;color:#a6a6a6;">U</span>
<span class="t " style="left:277.66px;top:155.00px;font-size:16px;color:#a6a6a6;">A</span>
<span class="t " style="left:304.16px;top:156.00px;font-size:13px;color:#a6a6a6;">A</span>
<span class="t " style="left:268.83px;top:176.50px;font-size:14px;color:#a3a3a3;">A</span>
<span class="t " style="left:416.66px;top:126.60px;font-size:10.5px;color:#999999;">ab</span>
<span class="t " style="left:416.38px;top:134.00px;font-size:10.5px;color:#999999;">c</span>
<span class="t" style="left:391.500px;top:177.500px;font-size:9.500px;color:#999999;transform:rotate(-42deg);transform-origin:50% 50%">ab</span>
<span class="t " style="left:465.82px;top:130.20px;font-size:12px;color:#b9b9b9;letter-spacing:-0.582px;">Księgowe</span>
<span class="t " style="left:505.59px;top:154.80px;font-size:17.8px;color:#a3a3a3;">%</span>
<span class="t " style="left:530.00px;top:154.80px;font-size:9.5px;color:#a3a3a3;letter-spacing:0.075px;">000</span>
<span class="t " style="left:476.84px;top:175.60px;font-size:9.2px;color:#999999;">0</span>
<span class="t " style="left:468.21px;top:183.00px;font-size:9.2px;color:#999999;">.00</span>
<span class="t " style="left:492.41px;top:175.60px;font-size:9.2px;color:#999999;">.00</span>
<span class="t " style="left:500.74px;top:183.00px;font-size:9.2px;color:#999999;">0</span>
<span class="t " style="left:587.84px;top:131.00px;font-size:11.6px;color:#b8b8b8;letter-spacing:-0.070px;">Formatowanie warunkowe</span>
<span class="t " style="left:587.84px;top:156.00px;font-size:11.6px;color:#b8b8b8;letter-spacing:-0.062px;">Formatuj jako tabelę</span>
<span class="t " style="left:587.84px;top:181.00px;font-size:11.6px;color:#b8b8b8;letter-spacing:-0.058px;">Style komórki</span>
<span class="t " style="left:778.54px;top:131.00px;font-size:11.6px;color:#b8b8b8;letter-spacing:-0.468px;">Wstaw</span>
<span class="t " style="left:778.54px;top:156.00px;font-size:11.6px;color:#b8b8b8;letter-spacing:-0.284px;">Usuń</span>
<span class="t " style="left:778.54px;top:181.00px;font-size:11.6px;color:#b8b8b8;letter-spacing:0.066px;">Formatuj</span>
<span class="t " style="left:901.73px;top:125.40px;font-size:8.6px;color:#a0a0a0;">A</span>
<span class="t " style="left:901.87px;top:134.20px;font-size:9.6px;color:#a0a0a0;">Z</span>
<span class="t " style="left:953.24px;top:162.60px;font-size:11.6px;color:#b8b8b8;letter-spacing:-0.163px;">Poufność</span>
<span class="t " style="left:1021.24px;top:162.60px;font-size:11.6px;color:#b8b8b8;letter-spacing:-0.067px;">Dodatki</span>
<span class="t " style="left:1080.04px;top:162.60px;font-size:11.6px;color:#b8b8b8;letter-spacing:0.170px;">Copilot</span>
<span class="t " style="left:129.31px;top:259.80px;font-size:13.6px;color:#333;">A</span>
<span class="t " style="left:216.86px;top:259.80px;font-size:13.6px;color:#333;">B</span>
<span class="t " style="left:328.09px;top:259.80px;font-size:13.6px;color:#333;">C</span>
<span class="t " style="left:446.54px;top:259.80px;font-size:13.6px;color:#1e5a3c;">D</span>
<span class="t " style="left:541.06px;top:259.80px;font-size:13.6px;color:#333;">E</span>
<span class="t " style="left:611.85px;top:259.80px;font-size:13.6px;color:#333;">F</span>
<span class="t " style="left:681.11px;top:259.80px;font-size:13.6px;color:#333;">G</span>
<span class="t " style="left:751.89px;top:259.80px;font-size:13.6px;color:#333;">H</span>
<span class="t " style="left:825.31px;top:259.80px;font-size:13.6px;color:#333;">I</span>
<span class="t " style="left:894.20px;top:259.80px;font-size:13.6px;color:#333;">J</span>
<span class="t " style="left:963.46px;top:259.80px;font-size:13.6px;color:#333;">K</span>
<span class="t " style="left:1034.62px;top:259.80px;font-size:13.6px;color:#333;">L</span>
<span class="t " style="left:1103.14px;top:259.80px;font-size:13.6px;color:#333;">M</span>
<span class="t " style="left:1174.29px;top:259.80px;font-size:13.6px;color:#333;">N</span>
<span class="t " style="left:79.78px;top:282.84px;font-size:14px;color:#333;letter-spacing:-0.545px;">1</span>
<span class="t " style="left:79.78px;top:304.71px;font-size:14px;color:#26593f;letter-spacing:-0.545px;">2</span>
<span class="t " style="left:79.78px;top:326.58px;font-size:14px;color:#333;letter-spacing:-0.545px;">3</span>
<span class="t " style="left:79.78px;top:348.45px;font-size:14px;color:#333;letter-spacing:-0.545px;">4</span>
<span class="t " style="left:79.78px;top:370.32px;font-size:14px;color:#333;letter-spacing:-0.545px;">5</span>
<span class="t " style="left:79.78px;top:392.19px;font-size:14px;color:#333;letter-spacing:-0.545px;">6</span>
<span class="t " style="left:79.78px;top:414.06px;font-size:14px;color:#333;letter-spacing:-0.545px;">7</span>
<span class="t " style="left:79.78px;top:435.93px;font-size:14px;color:#333;letter-spacing:-0.545px;">8</span>
<span class="t " style="left:79.78px;top:457.80px;font-size:14px;color:#333;letter-spacing:-0.545px;">9</span>
<span class="t " style="left:76.16px;top:479.67px;font-size:14px;color:#333;letter-spacing:-1.090px;">10</span>
<span class="t " style="left:76.16px;top:501.54px;font-size:14px;color:#333;letter-spacing:-1.090px;">11</span>
<span class="t " style="left:76.16px;top:523.40px;font-size:14px;color:#333;letter-spacing:-1.090px;">12</span>
<span class="t " style="left:76.16px;top:545.27px;font-size:14px;color:#333;letter-spacing:-1.090px;">13</span>
<span class="t " style="left:76.16px;top:567.14px;font-size:14px;color:#333;letter-spacing:-1.090px;">14</span>
<span class="t " style="left:76.16px;top:589.01px;font-size:14px;color:#333;letter-spacing:-1.090px;">15</span>
<span class="t " style="left:76.16px;top:610.88px;font-size:14px;color:#333;letter-spacing:-1.090px;">16</span>
<span class="t " style="left:76.16px;top:632.75px;font-size:14px;color:#333;letter-spacing:-1.090px;">17</span>
<span class="t " style="left:76.16px;top:654.62px;font-size:14px;color:#333;letter-spacing:-1.090px;">18</span>
<span class="t " style="left:76.16px;top:676.49px;font-size:14px;color:#333;letter-spacing:-1.090px;">19</span>
<span class="t " style="left:102.70px;top:282.39px;font-size:14.2px;color:#fff;font-weight:700;">ID</span>
<span class="t " style="left:172.43px;top:282.39px;font-size:14.2px;color:#fff;letter-spacing:0.040px;font-weight:700;">Cena netto</span>
<span class="t " style="left:276.93px;top:282.39px;font-size:14.2px;color:#fff;letter-spacing:-0.605px;font-weight:700;">Stawka VAT</span>
<span class="t " style="left:396.13px;top:282.39px;font-size:14.2px;color:#fff;letter-spacing:-0.064px;font-weight:700;">Cena brutto</span>
<span class="t " style="left:101.95px;top:304.31px;font-size:13.7px;color:#1a1a1a;letter-spacing:0.183px;-webkit-text-stroke:.22px #1a1a1a;">Towar 1</span>
<span class="t " style="left:206.13px;top:304.31px;font-size:13.7px;color:#1a1a1a;letter-spacing:0.521px;-webkit-text-stroke:.22px #1a1a1a;">120,00 zł</span>
<span class="t " style="left:368.31px;top:304.31px;font-size:13.7px;color:#1a1a1a;letter-spacing:0.594px;-webkit-text-stroke:.22px #1a1a1a;">5%</span>
<span class="t " style="left:101.95px;top:326.18px;font-size:13.7px;color:#1a1a1a;letter-spacing:0.183px;-webkit-text-stroke:.22px #1a1a1a;">Towar 2</span>
<span class="t " style="left:206.13px;top:326.18px;font-size:13.7px;color:#1a1a1a;letter-spacing:0.521px;-webkit-text-stroke:.22px #1a1a1a;">150,00 zł</span>
<span class="t " style="left:368.31px;top:326.18px;font-size:13.7px;color:#1a1a1a;letter-spacing:0.594px;-webkit-text-stroke:.22px #1a1a1a;">8%</span>
<span class="t " style="left:441.83px;top:326.18px;font-size:13.7px;color:#1a1a1a;letter-spacing:0.521px;-webkit-text-stroke:.22px #1a1a1a;">162,00 zł</span>
<span class="t " style="left:101.95px;top:348.05px;font-size:13.7px;color:#1a1a1a;letter-spacing:0.183px;-webkit-text-stroke:.22px #1a1a1a;">Towar 3</span>
<span class="t " style="left:206.13px;top:348.05px;font-size:13.7px;color:#1a1a1a;letter-spacing:0.521px;-webkit-text-stroke:.22px #1a1a1a;">170,00 zł</span>
<span class="t " style="left:360.46px;top:348.05px;font-size:13.7px;color:#1a1a1a;letter-spacing:0.411px;-webkit-text-stroke:.22px #1a1a1a;">23%</span>
<span class="t " style="left:441.83px;top:348.05px;font-size:13.7px;color:#1a1a1a;letter-spacing:0.521px;-webkit-text-stroke:.22px #1a1a1a;">209,10 zł</span>
<span class="t " style="left:101.95px;top:369.92px;font-size:13.7px;color:#1a1a1a;letter-spacing:0.183px;-webkit-text-stroke:.22px #1a1a1a;">Towar 4</span>
<span class="t " style="left:206.13px;top:369.92px;font-size:13.7px;color:#1a1a1a;letter-spacing:0.521px;-webkit-text-stroke:.22px #1a1a1a;">111,00 zł</span>
<span class="t " style="left:360.46px;top:369.92px;font-size:13.7px;color:#1a1a1a;letter-spacing:0.411px;-webkit-text-stroke:.22px #1a1a1a;">23%</span>
<span class="t " style="left:441.83px;top:369.92px;font-size:13.7px;color:#1a1a1a;letter-spacing:0.521px;-webkit-text-stroke:.22px #1a1a1a;">136,53 zł</span>
<span class="t " style="left:101.95px;top:391.79px;font-size:13.7px;color:#1a1a1a;letter-spacing:0.183px;-webkit-text-stroke:.22px #1a1a1a;">Towar 5</span>
<span class="t " style="left:214.32px;top:391.79px;font-size:13.7px;color:#1a1a1a;letter-spacing:0.514px;-webkit-text-stroke:.22px #1a1a1a;">98,00 zł</span>
<span class="t " style="left:360.46px;top:391.79px;font-size:13.7px;color:#1a1a1a;letter-spacing:0.411px;-webkit-text-stroke:.22px #1a1a1a;">23%</span>
<span class="t " style="left:441.83px;top:391.79px;font-size:13.7px;color:#1a1a1a;letter-spacing:0.521px;-webkit-text-stroke:.22px #1a1a1a;">120,54 zł</span>
<span class="t " style="left:101.95px;top:413.66px;font-size:13.7px;color:#1a1a1a;letter-spacing:0.183px;-webkit-text-stroke:.22px #1a1a1a;">Towar 6</span>
<span class="t " style="left:222.51px;top:413.66px;font-size:13.7px;color:#1a1a1a;letter-spacing:0.505px;-webkit-text-stroke:.22px #1a1a1a;">5,85 zł</span>
<span class="t " style="left:368.31px;top:413.66px;font-size:13.7px;color:#1a1a1a;letter-spacing:0.594px;-webkit-text-stroke:.22px #1a1a1a;">5%</span>
<span class="t " style="left:458.21px;top:413.66px;font-size:13.7px;color:#1a1a1a;letter-spacing:0.505px;-webkit-text-stroke:.22px #1a1a1a;">6,14 zł</span>
<span class="t " style="left:101.95px;top:435.53px;font-size:13.7px;color:#1a1a1a;letter-spacing:0.183px;-webkit-text-stroke:.22px #1a1a1a;">Towar 7</span>
<span class="t " style="left:214.32px;top:435.53px;font-size:13.7px;color:#1a1a1a;letter-spacing:0.514px;-webkit-text-stroke:.22px #1a1a1a;">75,00 zł</span>
<span class="t " style="left:368.31px;top:435.53px;font-size:13.7px;color:#1a1a1a;letter-spacing:0.594px;-webkit-text-stroke:.22px #1a1a1a;">5%</span>
<span class="t " style="left:450.02px;top:435.53px;font-size:13.7px;color:#1a1a1a;letter-spacing:0.514px;-webkit-text-stroke:.22px #1a1a1a;">78,75 zł</span>
<span class="t " style="left:101.95px;top:457.40px;font-size:13.7px;color:#1a1a1a;letter-spacing:0.183px;-webkit-text-stroke:.22px #1a1a1a;">Towar 8</span>
<span class="t " style="left:214.32px;top:457.40px;font-size:13.7px;color:#1a1a1a;letter-spacing:0.514px;-webkit-text-stroke:.22px #1a1a1a;">11,23 zł</span>
<span class="t " style="left:360.46px;top:457.40px;font-size:13.7px;color:#1a1a1a;letter-spacing:0.411px;-webkit-text-stroke:.22px #1a1a1a;">23%</span>
<span class="t " style="left:450.02px;top:457.40px;font-size:13.7px;color:#1a1a1a;letter-spacing:0.514px;-webkit-text-stroke:.22px #1a1a1a;">13,81 zł</span>
<span class="t " style="left:101.95px;top:479.27px;font-size:13.7px;color:#1a1a1a;letter-spacing:0.183px;-webkit-text-stroke:.22px #1a1a1a;">Towar 9</span>
<span class="t " style="left:206.13px;top:479.27px;font-size:13.7px;color:#1a1a1a;letter-spacing:0.521px;-webkit-text-stroke:.22px #1a1a1a;">198,00 zł</span>
<span class="t " style="left:368.31px;top:479.27px;font-size:13.7px;color:#1a1a1a;letter-spacing:0.594px;-webkit-text-stroke:.22px #1a1a1a;">8%</span>
<span class="t " style="left:441.83px;top:479.27px;font-size:13.7px;color:#1a1a1a;letter-spacing:0.521px;-webkit-text-stroke:.22px #1a1a1a;">213,84 zł</span>
<span class="t " style="left:101.95px;top:501.14px;font-size:13.7px;color:#1a1a1a;letter-spacing:0.157px;-webkit-text-stroke:.22px #1a1a1a;">Towar 10</span>
<span class="t " style="left:214.32px;top:501.14px;font-size:13.7px;color:#1a1a1a;letter-spacing:0.514px;-webkit-text-stroke:.22px #1a1a1a;">99,90 zł</span>
<span class="t " style="left:360.46px;top:501.14px;font-size:13.7px;color:#1a1a1a;letter-spacing:0.411px;-webkit-text-stroke:.22px #1a1a1a;">23%</span>
<span class="t " style="left:441.83px;top:501.14px;font-size:13.7px;color:#1a1a1a;letter-spacing:0.521px;-webkit-text-stroke:.22px #1a1a1a;">122,88 zł</span>
<span class="t " style="left:101.95px;top:523.00px;font-size:13.7px;color:#1a1a1a;letter-spacing:0.157px;-webkit-text-stroke:.22px #1a1a1a;">Towar 11</span>
<span class="t " style="left:214.32px;top:523.00px;font-size:13.7px;color:#1a1a1a;letter-spacing:0.514px;-webkit-text-stroke:.22px #1a1a1a;">55,45 zł</span>
<span class="t " style="left:360.46px;top:523.00px;font-size:13.7px;color:#1a1a1a;letter-spacing:0.411px;-webkit-text-stroke:.22px #1a1a1a;">23%</span>
<span class="t " style="left:450.02px;top:523.00px;font-size:13.7px;color:#1a1a1a;letter-spacing:0.514px;-webkit-text-stroke:.22px #1a1a1a;">68,20 zł</span>
<span class="t " style="left:101.95px;top:544.87px;font-size:13.7px;color:#1a1a1a;letter-spacing:0.157px;-webkit-text-stroke:.22px #1a1a1a;">Towar 12</span>
<span class="t " style="left:214.32px;top:544.87px;font-size:13.7px;color:#1a1a1a;letter-spacing:0.514px;-webkit-text-stroke:.22px #1a1a1a;">52,22 zł</span>
<span class="t " style="left:360.46px;top:544.87px;font-size:13.7px;color:#1a1a1a;letter-spacing:0.411px;-webkit-text-stroke:.22px #1a1a1a;">23%</span>
<span class="t " style="left:450.02px;top:544.87px;font-size:13.7px;color:#1a1a1a;letter-spacing:0.514px;-webkit-text-stroke:.22px #1a1a1a;">64,23 zł</span>
<span class="t " style="left:101.95px;top:566.75px;font-size:13.7px;color:#1a1a1a;letter-spacing:0.157px;-webkit-text-stroke:.22px #1a1a1a;">Towar 13</span>
<span class="t " style="left:206.13px;top:566.75px;font-size:13.7px;color:#1a1a1a;letter-spacing:0.521px;-webkit-text-stroke:.22px #1a1a1a;">105,15 zł</span>
<span class="t " style="left:368.31px;top:566.75px;font-size:13.7px;color:#1a1a1a;letter-spacing:0.594px;-webkit-text-stroke:.22px #1a1a1a;">8%</span>
<span class="t " style="left:441.83px;top:566.75px;font-size:13.7px;color:#1a1a1a;letter-spacing:0.521px;-webkit-text-stroke:.22px #1a1a1a;">113,56 zł</span>
<span class="t " style="left:101.95px;top:588.61px;font-size:13.7px;color:#1a1a1a;letter-spacing:0.157px;-webkit-text-stroke:.22px #1a1a1a;">Towar 14</span>
<span class="t " style="left:214.32px;top:588.61px;font-size:13.7px;color:#1a1a1a;letter-spacing:0.514px;-webkit-text-stroke:.22px #1a1a1a;">95,85 zł</span>
<span class="t " style="left:368.31px;top:588.61px;font-size:13.7px;color:#1a1a1a;letter-spacing:0.594px;-webkit-text-stroke:.22px #1a1a1a;">0%</span>
<span class="t " style="left:450.02px;top:588.61px;font-size:13.7px;color:#1a1a1a;letter-spacing:0.514px;-webkit-text-stroke:.22px #1a1a1a;">95,85 zł</span>
<span class="t " style="left:101.95px;top:610.49px;font-size:13.7px;color:#1a1a1a;letter-spacing:0.157px;-webkit-text-stroke:.22px #1a1a1a;">Towar 15</span>
<span class="t " style="left:214.32px;top:610.49px;font-size:13.7px;color:#1a1a1a;letter-spacing:0.514px;-webkit-text-stroke:.22px #1a1a1a;">13,13 zł</span>
<span class="t " style="left:368.31px;top:610.49px;font-size:13.7px;color:#1a1a1a;letter-spacing:0.594px;-webkit-text-stroke:.22px #1a1a1a;">0%</span>
<span class="t " style="left:450.02px;top:610.49px;font-size:13.7px;color:#1a1a1a;letter-spacing:0.514px;-webkit-text-stroke:.22px #1a1a1a;">13,13 zł</span>
<span class="t " style="left:101.95px;top:632.35px;font-size:13.7px;color:#1a1a1a;letter-spacing:0.157px;-webkit-text-stroke:.22px #1a1a1a;">Towar 16</span>
<span class="t " style="left:206.13px;top:632.35px;font-size:13.7px;color:#1a1a1a;letter-spacing:0.521px;-webkit-text-stroke:.22px #1a1a1a;">228,00 zł</span>
<span class="t " style="left:368.31px;top:632.35px;font-size:13.7px;color:#1a1a1a;letter-spacing:0.594px;-webkit-text-stroke:.22px #1a1a1a;">5%</span>
<span class="t " style="left:441.83px;top:632.35px;font-size:13.7px;color:#1a1a1a;letter-spacing:0.521px;-webkit-text-stroke:.22px #1a1a1a;">239,40 zł</span>
<span class="t " style="left:396.15px;top:304.31px;font-size:13.7px;color:#1a1a1a;letter-spacing:0.611px;-webkit-text-stroke:.22px #1a1a1a;">=B2+(B2*C2)</span>
</div>
</div>
<svg width="1280" height="787" viewBox="0 0 1280 787" style="pointer-events:none"><rect x="66.5" y="50" width="1144.5" height="695.5" rx="8" fill="none" stroke="#2a8a57" stroke-width="1"/></svg>
</body></html>
